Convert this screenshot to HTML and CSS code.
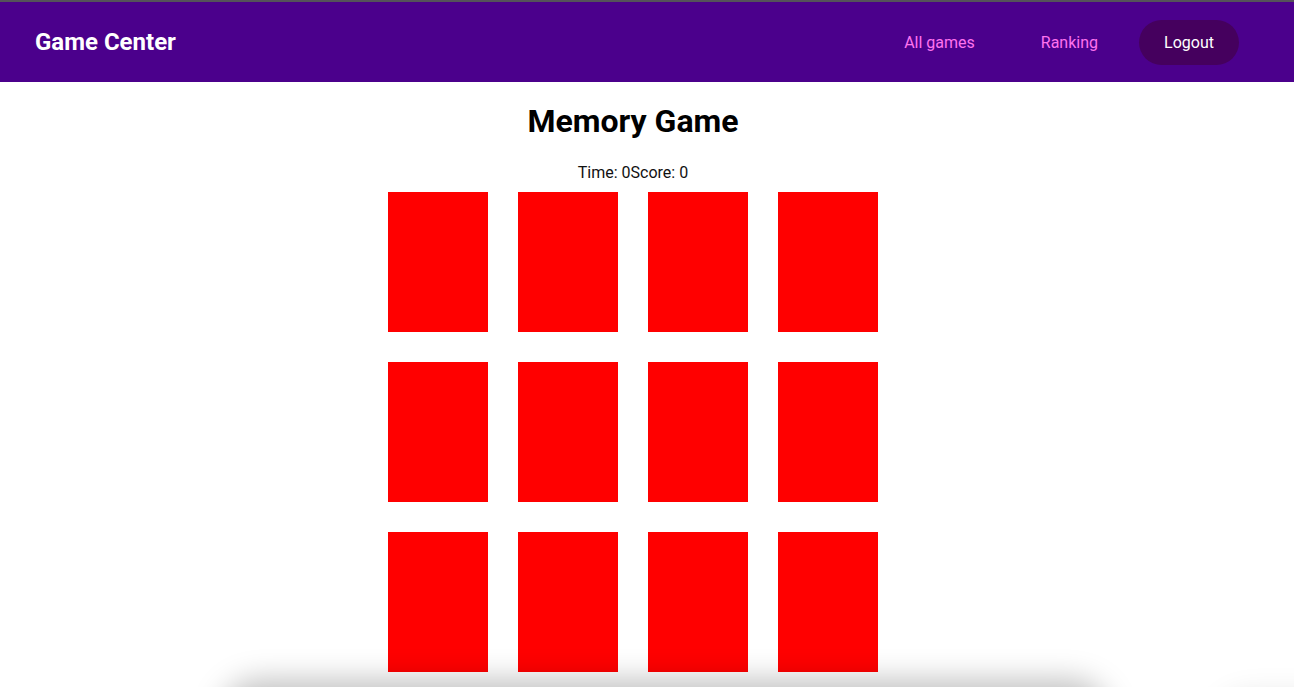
FILE: index.html
```html
<!DOCTYPE html>
<html lang="en">
<head>
<meta charset="utf-8">
<title>Game Center</title>
<link rel="stylesheet" href="styles.css">
</head>
<body>
<div class="topline"></div>
<nav class="navbar">
  <div class="brand">Game Center</div>
  <div class="links">
    <a class="link" href="#">All games</a>
    <a class="link" href="#">Ranking</a>
    <button class="logout">Logout</button>
  </div>
</nav>
<main class="main">
  <h1 class="title">Memory Game</h1>
  <div class="stats"><span>Time: 0</span><span>Score: 0</span></div>
  <div class="board">
    <div class="card"></div><div class="card"></div><div class="card"></div><div class="card"></div>
    <div class="card"></div><div class="card"></div><div class="card"></div><div class="card"></div>
    <div class="card"></div><div class="card"></div><div class="card"></div><div class="card"></div>
  </div>
</main>
<div class="shade shade-a"></div>
<div class="shade shade-b"></div>
</body>
</html>
```
FILE: styles.css
```css
html, body {
  margin: 0;
  padding: 0;
  background: #fff;
  font-family: Roboto, "Liberation Sans", sans-serif;
  overflow: hidden;
  height: 687px;
}
.topline {
  height: 2px;
  background: #55525a;
}
.navbar {
  height: 80px;
  background: #4b008c;
  display: flex;
  align-items: center;
  justify-content: space-between;
  padding: 0 55px 0 35px;
}
.brand {
  color: #fff;
  font-weight: 700;
  font-size: 24px;
}
.links {
  display: flex;
  align-items: center;
}
.link {
  color: #ff72ef;
  text-decoration: none;
  font-size: 16px;
  margin-right: 66px;
}
.link + .link {
  margin-right: 41px;
}
.logout {
  width: 100px;
  height: 45px;
  border: none;
  border-radius: 23px;
  background: #45005e;
  color: #fff;
  font-family: Roboto, "Liberation Sans", sans-serif;
  font-size: 16px;
  padding: 0;
}
.main {
  display: flex;
  flex-direction: column;
  align-items: center;
  padding-right: 28px;
}
.title {
  font-size: 32px;
  font-weight: 700;
  margin: 21px 0;
  line-height: 37px;
  color: #000;
}
.stats {
  font-size: 16px;
  line-height: 22px;
  color: #111;
  margin-top: 1px;
  margin-bottom: 8px;
}
.board {
  display: grid;
  grid-template-columns: repeat(4, 100px);
  grid-auto-rows: 140px;
  gap: 30px;
}
.card {
  background: #ff0000;
}
.shade {
  position: fixed;
  background: #fff;
  border-radius: 30px;
  box-shadow: 0 0 30px 10px rgba(0, 0, 0, 0.25);
}
.shade-a {
  left: 230px;
  width: 870px;
  top: 690px;
  height: 60px;
}
.shade-b {
  left: 1220px;
  width: 200px;
  top: 700px;
  height: 60px;
  box-shadow: 0 0 30px 6px rgba(0, 0, 0, 0.1);
}
```
